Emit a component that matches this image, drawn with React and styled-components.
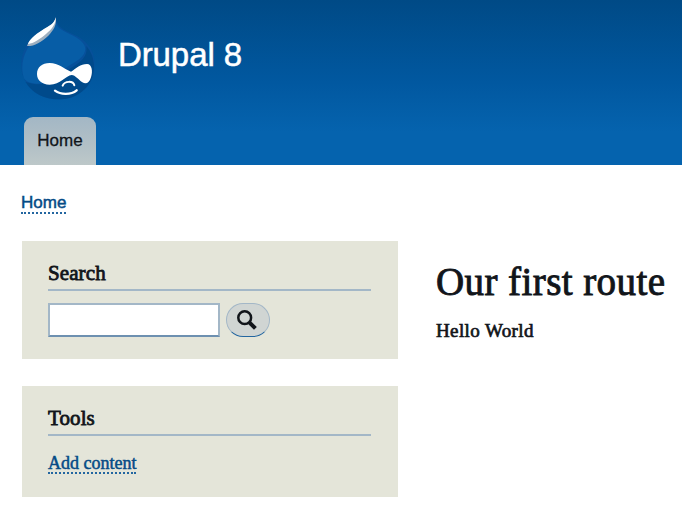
import React from "react";
import styled, { createGlobalStyle } from "styled-components";

const GlobalStyle = createGlobalStyle`
  * { box-sizing: border-box; }
  body {
    margin: 0;
    background: #fff;
    color: #11151a;
    font-family: "Liberation Serif", serif;
    overflow: hidden;
  }
`;

const Page = styled.div`
  width: 682px;
  height: 511px;
  overflow: hidden;
`;

const Header = styled.header`
  height: 165px;
  display: flex;
  flex-direction: column;
  justify-content: space-between;
  padding: 16px 21px 0;
  background: linear-gradient(#004a86 0%, #0158a0 50%, #0563ae 80%, #0563ae 100%);
`;

const Branding = styled.div`
  display: flex;
  align-items: flex-start;
`;

const Logo = styled.svg`
  width: 74px;
  height: 84px;
  display: block;
`;

const SiteName = styled.div`
  margin: 20px 0 0 23px;
  font: 33px/38px "Liberation Sans", sans-serif;
  letter-spacing: -0.1px;
  color: #fff;
  -webkit-text-stroke: 0.5px #fff;
`;

const Tab = styled.a`
  width: 72px;
  height: 48px;
  margin-left: 3px;
  display: flex;
  align-items: center;
  justify-content: center;
  border-radius: 9px 9px 0 0;
  background: linear-gradient(#a3b7c5, #b2c0c6 60%, #bdc8c9);
  color: #11151a;
  font: 17px/20px "Liberation Sans", sans-serif;
  -webkit-text-stroke: 0.3px;
`;

const Breadcrumb = styled.nav`
  height: 76px;
  padding: 28px 21px 0;
  display: flex;
  align-items: flex-start;
`;

const Link = styled.a`
  color: #054b86;
  border-bottom: 2px dotted #2366a0;
  -webkit-text-stroke: 0.5px;
`;

const Crumb = styled(Link)`
  height: 21px;
  font: 17px/20px "Liberation Sans", sans-serif;
`;

const Main = styled.main`
  display: grid;
  grid-template-columns: 376px 1fr;
  column-gap: 38px;
  padding-left: 22px;
`;

const Sidebar = styled.aside`
  display: flex;
  flex-direction: column;
  gap: 27px;
`;

const Block = styled.section`
  height: ${(p) => p.$height}px;
  padding: 19px 27px 0 26px;
  background: #e4e5d9;
`;

const BlockTitle = styled.h2`
  height: 31px;
  margin: 0;
  border-bottom: 2px solid #a3b7c7;
  font-size: 21px;
  line-height: 26px;
  font-weight: 400;
  letter-spacing: 0.1px;
  -webkit-text-stroke: 0.8px;
`;

const SearchForm = styled.form`
  display: flex;
  gap: 6px;
  margin-top: 12px;
`;

const SearchInput = styled.input`
  width: 172px;
  height: 34px;
  padding: 0 8px;
  border: 2px solid #a3b7c7;
  border-bottom-color: #6d90b0;
  border-radius: 0;
  outline: none;
  background: #fff;
`;

const SearchButton = styled.button`
  width: 44px;
  height: 34px;
  padding: 0 2px 1px 0;
  display: flex;
  align-items: center;
  justify-content: center;
  border: 1px solid #a3b7c7;
  border-bottom-color: #2366a0;
  border-radius: 17px;
  background: #d0d5d3;
`;

const ToolLink = styled(Link)`
  display: inline-block;
  height: 21px;
  margin-top: 17px;
  font-size: 18px;
  line-height: 21px;
  white-space: nowrap;
`;

const Content = styled.article`
  padding-top: 18px;
`;

const Title = styled.h1`
  margin: 0;
  font-size: 39px;
  line-height: 46px;
  font-weight: 400;
  letter-spacing: 0.42px;
  white-space: nowrap;
  -webkit-text-stroke: 0.9px;
`;

const Body = styled.p`
  margin: 14px 0 0;
  font-size: 19px;
  line-height: 24px;
  letter-spacing: 0.38px;
  -webkit-text-stroke: 0.7px;
`;

function DropLogo() {
  return (
    <Logo viewBox="33 33 222 252" aria-label="Drupal">
      <path fill="#07509a" d="M137 38C143 72 166 76 202 94C236 112 254 143 254 178C254 239 208 283 145 283C82 283 34 239 34 179C34 137 53 103 91 80C117 64 132 58 137 38Z" />
      <path fill="#075da6" d="M139 55C145 76 173 82 198 97C225 114 231 129 222 146C210 169 170 181 145 207C111 244 57 243 42 220C25 169 52 115 91 90C118 72 133 68 139 55Z" />
      <path fill="#004a8b" d="M229 123C249 145 257 180 249 209C238 253 197 283 145 283C100 283 64 262 47 231C99 248 134 231 158 207C187 180 236 170 229 123Z" />
      <path fill="#9eafbf" d="M137 37C142 58 130 77 115 92C94 112 72 124 51 123C54 111 72 91 91 80C117 64 132 58 137 37Z" />
      <path fill="#fff" d="M137 37C139 55 126 73 108 87C89 103 71 115 54 117C57 105 76 88 94 77C119 62 134 56 137 37Z" />
      <path fill="#fff" d="M119 174C145 174 163 192 183 200C199 190 211 177 231 177C246 177 249 199 243 217C238 234 228 239 217 232C205 223 196 211 185 210C168 211 151 239 119 239C95 239 81 225 81 207C81 187 96 174 119 174Z" />
      <path fill="none" stroke="#fff" strokeWidth="6" strokeLinecap="round" d="M158 242C164 227 190 227 193 241" />
      <path fill="none" stroke="#fff" strokeWidth="7" strokeLinecap="round" d="M135 257C151 269 182 271 200 256" />
    </Logo>
  );
}

function SearchIcon() {
  return (
    <svg width="20" height="20" viewBox="0 0 20 20" fill="none" stroke="#11151a">
      <circle cx="7.7" cy="7.7" r="6.4" strokeWidth="2.5" />
      <path d="M12.3 12.3L18.4 18.4" strokeWidth="4" />
    </svg>
  );
}

export default function App() {
  return (
    <Page>
      <GlobalStyle />
      <Header>
        <Branding>
          <DropLogo />
          <SiteName>Drupal 8</SiteName>
        </Branding>
        <Tab>Home</Tab>
      </Header>
      <Breadcrumb>
        <Crumb>Home</Crumb>
      </Breadcrumb>
      <Main>
        <Sidebar>
          <Block $height={118}>
            <BlockTitle>Search</BlockTitle>
            <SearchForm onSubmit={(e) => e.preventDefault()}>
              <SearchInput aria-label="Search" />
              <SearchButton aria-label="Search"><SearchIcon /></SearchButton>
            </SearchForm>
          </Block>
          <Block $height={111}>
            <BlockTitle>Tools</BlockTitle>
            <ToolLink>Add content</ToolLink>
          </Block>
        </Sidebar>
        <Content>
          <Title>Our first route</Title>
          <Body>Hello World</Body>
        </Content>
      </Main>
    </Page>
  );
}
